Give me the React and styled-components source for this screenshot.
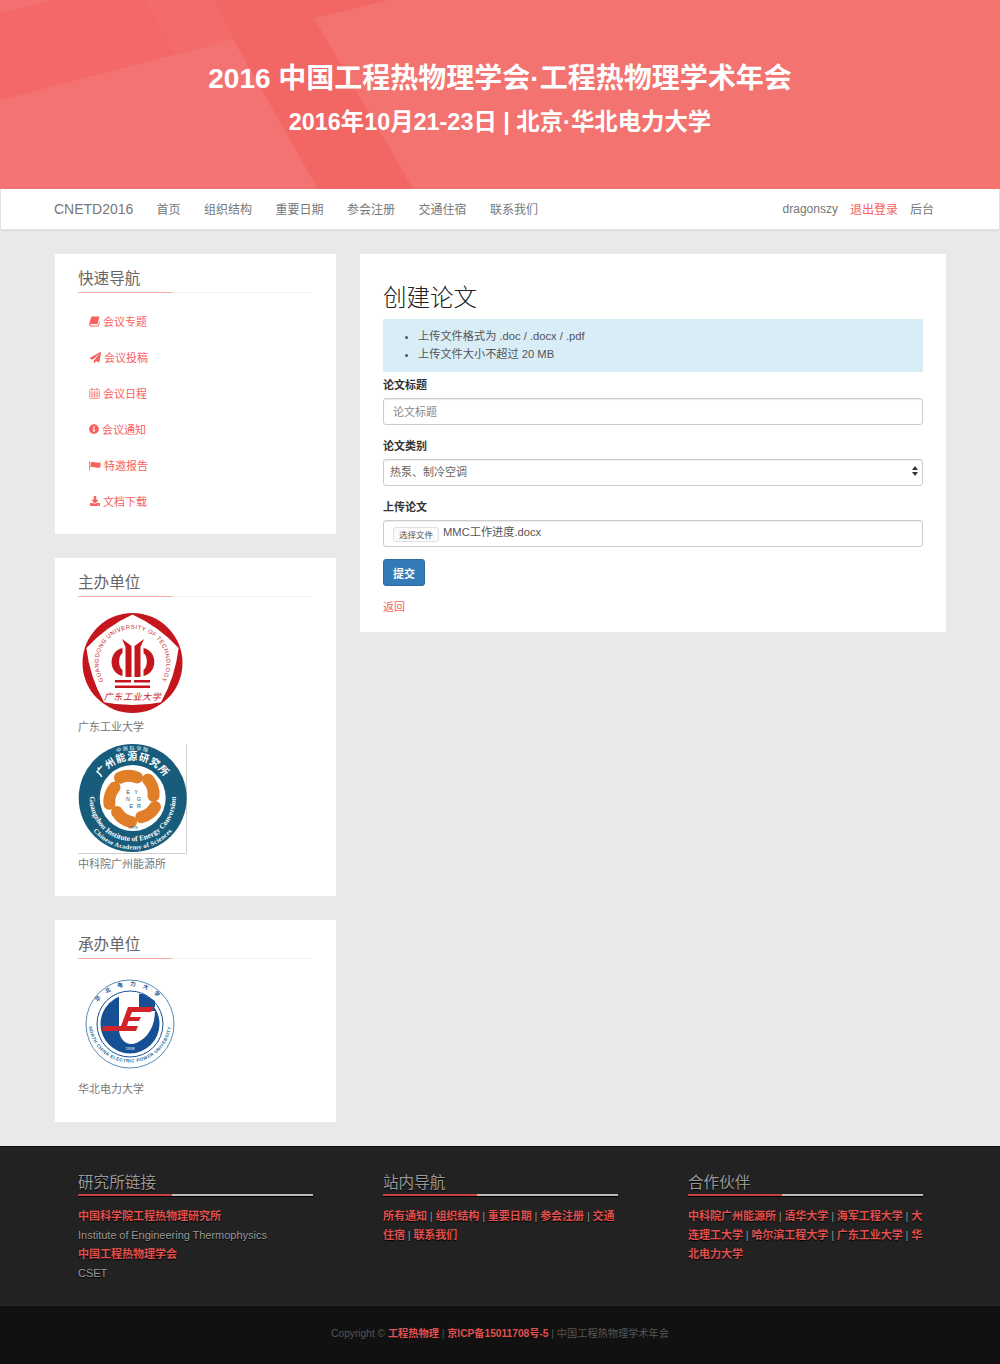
import React from "react";
import styled, { createGlobalStyle } from "styled-components";
import { FaPaperPlane, FaInfoCircle, FaDownload } from "react-icons/fa";

const FONT = `"Liberation Sans", "Noto Sans CJK SC", sans-serif`;

const GlobalStyle = createGlobalStyle`
  html, body { margin: 0; padding: 0; background: #e9e9e9; }
  body { font-family: ${FONT}; font-size: 11px; color: #555; }
  * { box-sizing: border-box; }
`;

const Banner = styled.header`
  position: relative;
  height: 189px;
  background: #f26664;
  display: flex;
  flex-direction: column;
  align-items: center;
  overflow: hidden;
`;

const BannerArt = styled.svg`
  position: absolute;
  inset: 0;
`;

const BannerTitle = styled.h1`
  position: relative;
  margin: 61px 0 0;
  font-size: 28px;
  line-height: 36px;
  font-weight: 700;
  color: #fff;
`;

const BannerSub = styled.h2`
  position: relative;
  margin: 9px 0 0;
  font-size: 23.4px;
  line-height: 32px;
  font-weight: 700;
  color: #fff;
`;

const Nav = styled.nav`
  height: 41px;
  margin-bottom: 24px;
  padding: 0 65px 1px 53px;
  display: flex;
  align-items: center;
  background: #fff;
  border: 1px solid #e2e2e2;
  border-top: 0;
  border-radius: 0 0 3px 3px;
  box-shadow: 0 1px 2px rgba(0, 0, 0, 0.06);
`;

const Brand = styled.a`
  font-size: 14px;
  color: #777;
  margin-right: 23px;
`;

const NavLinks = styled.div`
  display: flex;
  gap: 23.5px;
  flex: 1;
`;

const NavLink = styled.a`
  font-size: 12px;
  color: ${(p) => (p.$active ? "#f7615f" : "#777")};
`;

const NavRight = styled.div`
  display: flex;
  gap: 12px;
  align-items: center;
`;

const UserName = styled.span`
  font-size: 12px;
  color: #777;
`;

const Content = styled.main`
  display: grid;
  grid-template-columns: 281px 586px;
  gap: 24px;
  align-items: start;
  padding: 0 54px 24px 55px;
`;

const Sidebar = styled.aside`
  display: flex;
  flex-direction: column;
  gap: 24px;
`;

const Card = styled.section`
  background: #fff;
  padding: 14px 24px ${(p) => p.$bottom || 24}px 23px;
`;

const CardTitle = styled.h3`
  margin: 0;
  height: 25px;
  font-size: 15.6px;
  line-height: 21px;
  font-weight: 400;
  color: #666;
  background: linear-gradient(to right, #fda9a6 94px, #f1f1f1 94px) bottom / 100% 1px no-repeat;
`;

const QuickList = styled.ul`
  list-style: none;
  margin: 10px 0 0;
  padding: 0 0 0 11px;
`;

const QuickItem = styled.li`
  height: 36px;
  display: flex;
  align-items: center;
  gap: 3px;
  font-size: 11px;
  color: #f7615f;
`;

const QuickIcon = styled.span`
  flex: none;
  width: ${(p) => p.$w}px;
  display: flex;
  align-items: center;
  justify-content: center;
`;

const Org = styled.figure`
  margin: ${(p) => p.$top}px 0 0;
`;

const OrgLogo = styled.svg`
  display: block;
  margin-left: ${(p) => p.$left || 0}px;
`;

const OrgName = styled.figcaption`
  margin-top: ${(p) => p.$gap || 0}px;
  font-size: 11px;
  line-height: 18px;
  color: #777;
`;

const Panel = styled.section`
  background: #fff;
  padding: 27px 23px 16px;
`;

const PanelTitle = styled.h2`
  margin: 0 0 4px;
  font-size: 23.5px;
  line-height: 34px;
  font-weight: 300;
  color: #222;
`;

const Notice = styled.ul`
  margin: 0 0 4px;
  padding: 8px 0 9px 35px;
  background: #d9edf7;
  font-size: 11.2px;
  line-height: 18px;
  color: #555;
`;

const FieldLabel = styled.label`
  display: block;
  margin-bottom: 4px;
  font-size: 11px;
  line-height: 18px;
  font-weight: 700;
  color: #333;
`;

const Field = styled.div`
  margin-bottom: 12px;
`;

const TextInput = styled.input`
  display: block;
  width: 100%;
  height: 27px;
  padding: 0 9px;
  border: 1px solid #ccc;
  border-radius: 3px;
  box-shadow: inset 0 1px 1px rgba(0, 0, 0, 0.075);
  font: 11px ${FONT};
  &::placeholder { color: #888; opacity: 1; }
`;

const SelectBox = styled.div`
  height: 27px;
  padding: 0 4px 3px 6px;
  display: flex;
  align-items: center;
  justify-content: space-between;
  border: 1px solid #ccc;
  border-radius: 3px;
  box-shadow: inset 0 1px 1px rgba(0, 0, 0, 0.075);
  font-size: 11px;
  color: #666;
`;

const FileBox = styled.div`
  height: 27px;
  padding: 0 9px;
  display: flex;
  align-items: flex-start;
  gap: 4px;
  border: 1px solid #ccc;
  border-radius: 3px;
  box-shadow: inset 0 1px 1px rgba(0, 0, 0, 0.075);
  font-size: 11.2px;
  line-height: 22px;
  color: #555;
`;

const FileButton = styled.span`
  margin-top: 6px;
  width: 46px;
  height: 15px;
  display: flex;
  align-items: center;
  justify-content: center;
  background: #fbfbfb;
  border: 1px solid #e0e0e0;
  border-radius: 3px;
  font-size: 8.5px;
  color: #555;
`;

const SubmitButton = styled.button`
  display: block;
  width: 42px;
  height: 27px;
  margin: 11px 0 12px;
  padding: 0;
  background: #337ab7;
  border: 1px solid #2e6da4;
  border-radius: 3px;
  color: #fff;
  font: 700 11px ${FONT};
`;

const BackLink = styled.a`
  display: block;
  font-size: 11px;
  line-height: 18px;
  color: #f7615f;
`;

const Footer = styled.footer`
  background: #222;
  border-top: 1px solid #111;
  padding: 25px 77px 0 78px;
  height: 159px;
  display: grid;
  grid-template-columns: repeat(3, 235px);
  gap: 70px;
`;

const FootTitle = styled.h4`
  margin: 0 0 10px;
  height: 25px;
  font-size: 15.6px;
  line-height: 22px;
  font-weight: 400;
  color: #999;
  text-shadow: 0 1px 1px #000;
  background: linear-gradient(to right, #c9433f 94px, #bbb 94px) 0 22px / 100% 2px no-repeat,
    linear-gradient(#000, #000) 0 24px / 100% 1px no-repeat;
`;

const FootText = styled.div`
  font-size: 11px;
  line-height: 19px;
  word-spacing: -0.3px;
  color: #999;
  text-shadow: 0 1px 1px #000;
`;

const FootLink = styled.a`
  font-weight: 700;
  color: #e0504d;
`;

const FootRow = styled.div`
  color: ${(p) => (p.$plain ? "#999" : "#e0504d")};
  font-weight: ${(p) => (p.$plain ? 400 : 700)};
`;

const Copyright = styled.div`
  height: 59px;
  background: #111;
  border-top: 1px solid #2a2a2a;
  padding-top: 20px;
  text-align: center;
  font-size: 10.2px;
  line-height: 16px;
  color: #555;
`;

// point on a circle, angle in degrees
const polar = (cx, cy, r, deg) => {
  const a = (deg * Math.PI) / 180;
  return [cx + r * Math.cos(a), cy + r * Math.sin(a)];
};

function flowerPath(cx, cy, tipR, midR) {
  let d = "";
  for (let i = 0; i < 5; i++) {
    const start = -90 + i * 72;
    const [x0, y0] = polar(cx, cy, tipR, start);
    const [qx, qy] = polar(cx, cy, midR, start + 36);
    const [x1, y1] = polar(cx, cy, tipR, start + 72);
    d += `${i === 0 ? `M${x0} ${y0}` : ""} Q${qx} ${qy} ${x1} ${y1}`;
  }
  return d + " Z";
}

function GdutLogo() {
  const red = "#c5161d";
  return (
    <OrgLogo width="108" height="108" viewBox="0 0 108 108">
      <circle cx="54.5" cy="53" r="50" fill={red} />
      <path d={flowerPath(54.5, 53, 48.5, 45)} fill="#fff" />
      <defs>
        <path id="gdutArc" d="M30.5 77 A34 34 0 1 1 78.5 77" />
      </defs>
      <text fill={red} fontFamily="Liberation Sans, sans-serif" fontSize="5.8" letterSpacing="0.5">
        <textPath href="#gdutArc" startOffset="50%" textAnchor="middle">GUANGDONG UNIVERSITY OF TECHNOLOGY</textPath>
      </text>
      <path d="M44 29 L53.5 36 V67 H47.5 V37 Z" fill={red} />
      <path d="M44.5 38 C30 41 30 63 44.5 66 L44.5 60 C40 57 40 46 44.5 43 Z" fill={red} />
      <path d="M66 29 L56.5 36 V67 H62.5 V37 Z" fill={red} />
      <path d="M65.5 38 C80 41 80 63 65.5 66 L65.5 60 C70 57 70 46 65.5 43 Z" fill={red} />
      <rect x="37" y="70" width="16" height="2.5" fill={red} />
      <rect x="56" y="70" width="16" height="2.5" fill={red} />
      <rect x="37" y="75.5" width="35" height="2.5" fill={red} />
      <text x="54.5" y="90" textAnchor="middle" fill={red} fontFamily="Noto Sans CJK SC, sans-serif" fontSize="9" fontStyle="italic" letterSpacing="0.6">广东工业大学</text>
    </OrgLogo>
  );
}

function GiecLogo() {
  const teal = "#185c7b";
  const lobes = [-100, -28, 44, 116, 188];
  const letters = [
    ["E", 50, 50], ["Y", 58, 50], ["N", 50, 57], ["G", 61, 57], ["E", 53, 64], ["R", 61, 64],
  ];
  return (
    <OrgLogo width="110" height="111" viewBox="0 0 110 111">
      <path d="M108.5 0 V109.5 H0" fill="none" stroke="#cfcfcf" />
      <circle cx="54.7" cy="54" r="54" fill={teal} />
      <circle cx="54.7" cy="54" r="33" fill="#fff" />
      <defs>
        <path id="giecCn" d="M16.7 54 A38 38 0 0 1 92.7 54" />
        <path id="giecTiny" d="M6.7 54 A48 48 0 0 1 102.7 54" />
        <path id="giecMid" d="M12.5 46 A43 43 0 1 0 96.9 46" />
        <path id="giecOut" d="M14.4 86 A51.5 51.5 0 0 0 95 86" />
      </defs>
      <text fill="#fff" fontFamily="Noto Sans CJK SC, sans-serif" fontSize="10" fontWeight="700" letterSpacing="0.8">
        <textPath href="#giecCn" startOffset="50%" textAnchor="middle">广州能源研究所</textPath>
      </text>
      <text fill="#fff" fontFamily="Noto Sans CJK SC, sans-serif" fontSize="5" letterSpacing="1.5">
        <textPath href="#giecTiny" startOffset="50%" textAnchor="middle">中国科学院</textPath>
      </text>
      <text fill="#fff" fontFamily="Liberation Serif, serif" fontSize="7.5" fontWeight="700">
        <textPath href="#giecMid" startOffset="50%" textAnchor="middle">Guangzhou Institute of Energy Conversion</textPath>
      </text>
      <text fill="#fff" fontFamily="Liberation Serif, serif" fontSize="6.5" fontWeight="700" letterSpacing="0.3">
        <textPath href="#giecOut" startOffset="50%" textAnchor="middle">Chinese Academy of Sciences</textPath>
      </text>
      {lobes.map((deg) => {
        const [x0, y0] = polar(54.7, 54, 24, deg - 22);
        const [x1, y1] = polar(54.7, 54, 21, deg + 22);
        return (
          <path
            key={deg}
            d={`M${x0} ${y0} A22 22 0 0 1 ${x1} ${y1}`}
            fill="none"
            stroke="#e07f28"
            strokeWidth="12"
            strokeLinecap="round"
          />
        );
      })}
      {letters.map(([ch, x, y], i) => (
        <text key={i} x={x} y={y} textAnchor="middle" fill={teal} fontFamily="Liberation Sans, sans-serif" fontSize="5.5">{ch}</text>
      ))}
      <text x="54.7" y="85" textAnchor="middle" fill={teal} fontFamily="Liberation Serif, serif" fontSize="5">1978</text>
    </OrgLogo>
  );
}

function NcepuLogo() {
  const blue = "#174f95";
  return (
    <OrgLogo width="92" height="90" viewBox="0 0 92 90" $left={5}>
      <circle cx="47" cy="45" r="44" fill="#fff" stroke="#2a6f9e" strokeWidth="0.8" />
      <circle cx="47" cy="45" r="33" fill="#fff" stroke={blue} strokeWidth="1" />
      <circle cx="47" cy="45" r="29.5" fill={blue} />
      <path d="M36 15 H56 V32 H72 C72 50 62 62 50 65 C41 66 36 58 36 50 Z" fill="#fff" />
      <path d="M56 15 H60 L72 22 V28 H56 Z" fill={blue} />
      <path d="M45 28 H71 L68 33 H49 L47 38 H58 L56 42 H45.5 L44 47 H55 L53 52 H19 L20 47 H38 Z" fill="#d3232a" />
      <defs>
        <path id="ncepuArc" d="M5.5 42 A41.5 41.5 0 1 0 88.5 42" />
        <path id="ncepuTop" d="M7 47 A40 40 0 0 1 87 47" />
      </defs>
      <text fill="#2a6f9e" fontFamily="Liberation Sans, sans-serif" fontSize="4.6" fontWeight="700" letterSpacing="0.4">
        <textPath href="#ncepuArc" startOffset="50%" textAnchor="middle">NORTH CHINA ELECTRIC POWER UNIVERSITY</textPath>
      </text>
      <text fill={blue} fontFamily="Noto Sans CJK SC, sans-serif" fontSize="5.5" fontWeight="700" letterSpacing="7">
        <textPath href="#ncepuTop" startOffset="50%" textAnchor="middle">华北电力大学</textPath>
      </text>
      <text x="47" y="71" textAnchor="middle" fill="#fff" fontFamily="Liberation Sans, sans-serif" fontSize="4">1958</text>
    </OrgLogo>
  );
}

function BookIcon() {
  return (
    <svg width="11" height="11" viewBox="0 0 11 11" fill="currentColor">
      <path d="M3 0.5 H10.5 L8.5 8 H2 C1.2 8 1.2 9.5 2 9.5 H9 L10.5 4 V8 L9.3 10.5 H1.6 C0.3 10.5 0 9 0.3 7.8 L2 1.5 C2.2 0.9 2.5 0.5 3 0.5 Z" />
    </svg>
  );
}

function CalendarIcon() {
  return (
    <svg width="11" height="11" viewBox="0 0 11 11" fill="none" stroke="currentColor" strokeWidth="0.7" opacity="0.8">
      <rect x="0.5" y="1.5" width="10" height="9" rx="0.8" />
      <path d="M0.5 4 H10.5 M0.5 6 H10.5 M0.5 8 H10.5 M3 4 V10.5 M5.5 4 V10.5 M8 4 V10.5" />
      <path d="M3 0 V2.5 M8 0 V2.5" strokeWidth="1.2" />
    </svg>
  );
}

function FlagIcon() {
  return (
    <svg width="12" height="11" viewBox="0 0 12 11" fill="currentColor">
      <path d="M0.3 1 H1 V10.5 H0.3 Z" />
      <path d="M1.5 2.5 C4 1.2 7 3.7 11.5 2.2 V7.2 C7 8.7 4 6.2 1.5 7.5 Z" />
    </svg>
  );
}

const quickLinks = [
  { icon: <BookIcon />, w: 11, label: "会议专题" },
  { icon: <FaPaperPlane size={11} />, w: 12, label: "会议投稿" },
  { icon: <CalendarIcon />, w: 11, label: "会议日程" },
  { icon: <FaInfoCircle size={10} />, w: 10, label: "会议通知" },
  { icon: <FlagIcon />, w: 12, label: "特邀报告" },
  { icon: <FaDownload size={10} />, w: 11, label: "文档下载" },
];

export default function App() {
  return (
    <>
      <GlobalStyle />
      <Banner>
        <BannerArt width="1000" height="189" viewBox="0 0 1000 189">
          <polygon points="0,13 55,0 145,0 175,53 0,100" fill="#f46967" />
          <polygon points="145,0 215,0 233,39 175,53" fill="#f46c6a" />
          <polygon points="0,100 233,39 318,189 0,189" fill="#f37372" />
          <polygon points="314,18 389,0 1000,0 1000,189 413,189" fill="#f27370" />
          <polygon points="0,0 55,0 0,13" fill="#f37170" />
        </BannerArt>
        <BannerTitle>2016 中国工程热物理学会·工程热物理学术年会</BannerTitle>
        <BannerSub>2016年10月21-23日 | 北京·华北电力大学</BannerSub>
      </Banner>

      <Nav>
        <Brand>CNETD2016</Brand>
        <NavLinks>
          <NavLink>首页</NavLink>
          <NavLink>组织结构</NavLink>
          <NavLink>重要日期</NavLink>
          <NavLink>参会注册</NavLink>
          <NavLink>交通住宿</NavLink>
          <NavLink>联系我们</NavLink>
        </NavLinks>
        <NavRight>
          <UserName>dragonszy</UserName>
          <NavLink $active>退出登录</NavLink>
          <NavLink>后台</NavLink>
        </NavRight>
      </Nav>

      <Content>
        <Sidebar>
          <Card $bottom={15}>
            <CardTitle>快速导航</CardTitle>
            <QuickList>
              {quickLinks.map(({ icon, w, label }) => (
                <QuickItem key={label}>
                  <QuickIcon $w={w}>{icon}</QuickIcon>
                  {label}
                </QuickItem>
              ))}
            </QuickList>
          </Card>

          <Card $bottom={23}>
            <CardTitle>主办单位</CardTitle>
            <Org $top={13}>
              <GdutLogo />
              <OrgName>广东工业大学</OrgName>
            </Org>
            <Org $top={8}>
              <GiecLogo />
              <OrgName>中科院广州能源所</OrgName>
            </Org>
          </Card>

          <Card>
            <CardTitle>承办单位</CardTitle>
            <Org $top={20}>
              <NcepuLogo />
              <OrgName $gap={11}>华北电力大学</OrgName>
            </Org>
          </Card>
        </Sidebar>

        <Panel>
          <PanelTitle>创建论文</PanelTitle>
          <Notice>
            <li>上传文件格式为 .doc / .docx / .pdf</li>
            <li>上传文件大小不超过 20 MB</li>
          </Notice>
          <Field>
            <FieldLabel>论文标题</FieldLabel>
            <TextInput placeholder="论文标题" />
          </Field>
          <Field>
            <FieldLabel>论文类别</FieldLabel>
            <SelectBox>
              热泵、制冷空调
              <svg width="6" height="10" viewBox="0 0 6 10">
                <path d="M3 0 L6 4 H0 Z M3 10 L0 6 H6 Z" fill="#333" />
              </svg>
            </SelectBox>
          </Field>
          <Field>
            <FieldLabel>上传论文</FieldLabel>
            <FileBox>
              <FileButton>选择文件</FileButton>
              MMC工作进度.docx
            </FileBox>
          </Field>
          <SubmitButton>提交</SubmitButton>
          <BackLink>返回</BackLink>
        </Panel>
      </Content>

      <Footer>
        <div>
          <FootTitle>研究所链接</FootTitle>
          <FootText>
            <FootRow>中国科学院工程热物理研究所</FootRow>
            <FootRow $plain>Institute of Engineering Thermophysics</FootRow>
            <FootRow>中国工程热物理学会</FootRow>
            <FootRow $plain>CSET</FootRow>
          </FootText>
        </div>
        <div>
          <FootTitle>站内导航</FootTitle>
          <FootText>
            <FootLink>所有通知</FootLink> | <FootLink>组织结构</FootLink> | <FootLink>重要日期</FootLink> | <FootLink>参会注册</FootLink> | <FootLink>交通住宿</FootLink> | <FootLink>联系我们</FootLink>
          </FootText>
        </div>
        <div>
          <FootTitle>合作伙伴</FootTitle>
          <FootText>
            <FootLink>中科院广州能源所</FootLink> | <FootLink>清华大学</FootLink> | <FootLink>海军工程大学</FootLink> | <FootLink>大连理工大学</FootLink> | <FootLink>哈尔滨工程大学</FootLink> | <FootLink>广东工业大学</FootLink> | <FootLink>华北电力大学</FootLink>
          </FootText>
        </div>
      </Footer>
      <Copyright>
        Copyright © <FootLink>工程热物理</FootLink> | <FootLink>京ICP备15011708号-5</FootLink> | 中国工程热物理学术年会
      </Copyright>
    </>
  );
}
